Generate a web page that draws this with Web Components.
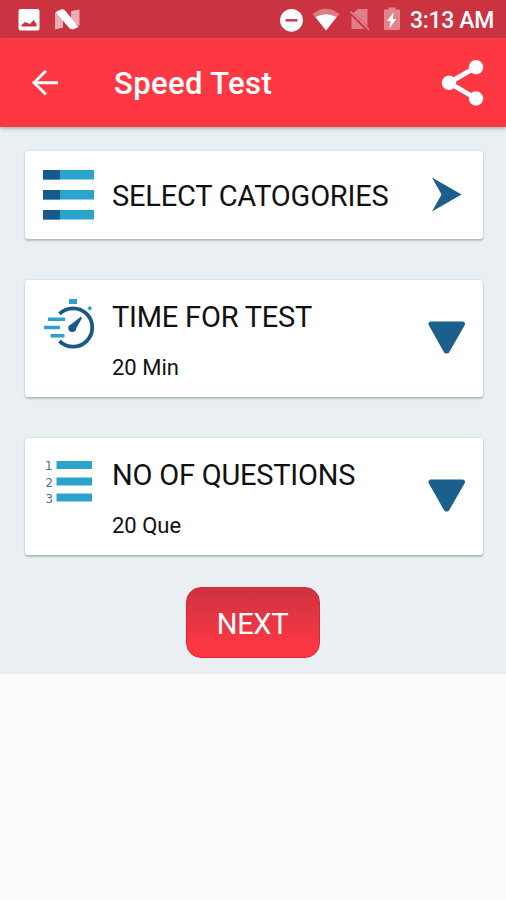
<!DOCTYPE html>
<html lang="en">
<head>
<meta charset="utf-8">
<title>Speed Test</title>
<style>
html, body { margin: 0; height: 100%; background: #fbfbfb; font-family: Roboto, "Liberation Sans", sans-serif; }
</style>
</head>
<body>
<speed-test-app></speed-test-app>
<script>
const define = (name, html) => customElements.define(name, class extends HTMLElement {
  constructor() {
    super();
    this.attachShadow({ mode: 'open' }).innerHTML = '<style>svg{display:block;flex:none}</style>' + html;
  }
});

define('status-bar', `
<style>
:host { display: flex; height: 38px; background: #cc3341; color: #fff; align-items: center; box-sizing: border-box; padding: 0 12px 0 18px; justify-content: space-between; }
.group { display: flex; align-items: center; }
.time { font-size: 23px; line-height: 36px; font-weight: 500; width: 84px; white-space: nowrap; padding-top: 3px; letter-spacing: -.35px; }
</style>
<div class="group">
<svg width="64" height="38" viewBox="18 0 64 38">
  <path fill="#fff" fill-rule="evenodd" d="M20.5 9h17a2 2 0 0 1 2 2v17.500a2 2 0 0 1-2 2h-17a2 2 0 0 1-2-2V11a2 2 0 0 1 2-2zM21.500 26.500h15v-2.500l-3-4-3.500 4-5-2-3.500 3z"/>
  <path fill="#fff" opacity=".6" d="M55 12.500L63 16v11.500L55 29.500zM71 11L79.500 9.500V26L71 21.500z"/>
  <path fill="#fff" d="M55.500 12l5.500-2.500q3-.7 4.500 1.500L78.500 27l-5 2.200q-2.500.5-4.500-1.500z"/>
</svg>
</div>
<div class="group">
<svg width="131" height="38" viewBox="279 0 131 38">
  <circle cx="291.500" cy="20.300" r="11.400" fill="#fff"/><path d="M285.500 20.300h12" stroke="#cc3341" stroke-width="2.400"/>
  <path d="M312.500 14q13.500-10.500 27 0L326 30.500z" fill="#fff" opacity=".35"/>
  <path d="M315.500 17q10.500-5.500 21 0L326 30.500z" fill="#fff"/>
  <path d="M358 9h9.500v17.500L353.500 13zM351.500 16l13 13h-13z" fill="#fff" opacity=".38"/>
  <path d="M350.500 11.500l18.500 18" stroke="#fff" stroke-width="1.700" opacity=".4"/>
  <path d="M388.500 7.500h7v2h3.500a1 1 0 0 1 1 1v18.500a1 1 0 0 1-1 1h-14a1 1 0 0 1-1-1V10.500a1 1 0 0 1 1-1h3.500z" fill="#fff" opacity=".4"/>
  <path d="M394 12l-7 9h3.700l-1.400 7.500 7-9.500h-3.600z" fill="#fff"/>
</svg>
<span class="time">3:13 AM</span>
</div>`);

define('app-bar', `
<style>
:host { display: flex; height: 89px; background: #fe3843; color: #fff; align-items: center; position: relative; box-shadow: 0 1px 4px rgba(70,90,100,.55); }
.title { flex: 1; font-size: 31px; line-height: 40px; font-weight: 500; letter-spacing: .4px; padding-top: 2px; }
</style>
<svg width="114" height="89" viewBox="0 38 114 89"><path d="M58 82.700H34M46 70.800L34 82.700 46 94.500" fill="none" stroke="#fff" stroke-width="2.900"/></svg>
<span class="title"><slot></slot></span>
<svg width="76" height="89" viewBox="430 38 76 89"><path d="M476 67.200L449 82.800 476 98.500" fill="none" stroke="#fff" stroke-width="4.800"/><g fill="#fff"><circle cx="476" cy="67.200" r="7.200"/><circle cx="449" cy="82.800" r="7.200"/><circle cx="476" cy="98.500" r="7.200"/></g></svg>`);

define('option-card', `
<style>
:host { display: grid; grid-template-columns: 87px 1fr 76px; height: var(--card-height, 117px); box-sizing: border-box; background: #fff; border-radius: 3px; box-shadow: 0 2px 2px rgba(80,95,95,.32), 0 0 2px rgba(80,95,95,.25); color: #111; }
.copy { display: flex; flex-direction: column; padding-top: var(--copy-top, 19px); white-space: nowrap; }
.label { font-size: 29px; line-height: 36px; letter-spacing: -.22px; }
.value { font-size: 22px; line-height: 28px; padding-top: 19px; }
</style>
<slot name="icon"></slot>
<div class="copy"><span class="label"><slot></slot></span><span class="value"><slot name="value"></slot></span></div>
<slot name="action"></slot>`);

define('category-icon', `<style>:host{display:block}</style>
<svg width="87" height="87" viewBox="25 151 87 87"><path fill="#2ba3cc" d="M43 170h51v9.500H43zM43 190h51v9.500H43zM43 210h51v9.500H43z"/><path fill="#165a8c" d="M43 170h17v9.500H43zM43 190h17v9.500H43zM43 210h17v9.500H43z"/></svg>`);

define('timer-icon', `<style>:host{display:block}</style>
<svg width="87" height="117" viewBox="25 280 87 117">
<path d="M59.500 313.900A19.200 19.200 0 1 1 59.500 341.100" fill="none" stroke="#185987" stroke-width="3.800"/>
<path d="M80.700 316.700L82 318 76.300 328.200A4 4 0 1 1 71.200 324.200z" fill="#185987"/>
<path d="M69 299h8v5h-8zM48 317.500h17v3.500H48zM44 325.800h16v3.500H44zM50.500 334h14v3.500h-14z" fill="#2ba3cc"/>
<path d="M89.800 306l2.500 2.300-2.500 2.400-2.400-2.400z" fill="#2ba3cc"/></svg>`);

define('question-icon', `<style>:host{display:block} text{font:13px "DejaVu Sans Condensed","DejaVu Sans",sans-serif;fill:#47718d}</style>
<svg width="87" height="117" viewBox="25 438 87 117"><path fill="#2ba3cc" d="M56.500 461H92v8H56.500zM56.500 477.500H92v8H56.500zM56.500 493.500H92v8H56.500z"/>
<text x="45" y="469.500">1</text><text x="45.500" y="486.500">2</text><text x="45.500" y="502.800">3</text></svg>`);

define('forward-icon', `<style>:host{display:block}</style>
<svg width="76" height="87" viewBox="407 151 76 87"><path d="M432 177.500L461.500 194.500 432 211.500 441.500 194.500z" fill="#1b5f8c"/></svg>`);

define('dropdown-icon', `<style>:host{display:block}</style>
<svg width="76" height="117" viewBox="407 280 76 117"><path d="M431 324H462.500L447 351h-.8z" fill="#1b5f8c" stroke="#1b5f8c" stroke-width="5" stroke-linejoin="round"/></svg>`);

define('next-button', `
<style>
:host { display: flex; width: 134px; height: 71px; box-sizing: border-box; border-radius: 15px; background: linear-gradient(#cd3340, #fc3744 85%); border: 1px solid #e32335; color: #fff; align-items: center; justify-content: center; font-size: 29px; line-height: 36px; letter-spacing: -.3px; padding-top: 3px; }
</style><slot></slot>`);

define('speed-test-app', `
<style>
:host { display: block; }
main { display: flex; flex-direction: column; box-sizing: border-box; height: 547px; padding: 24px 23px 0 25px; background: #e9eff2; gap: 41px; }
.categories { --card-height: 88px; --copy-top: 27px; }
next-button { align-self: center; margin: -9px 0 0 -3px; }
</style>
<status-bar></status-bar>
<app-bar>Speed Test</app-bar>
<main>
<option-card class="categories"><category-icon slot="icon"></category-icon>SELECT CATOGORIES<forward-icon slot="action"></forward-icon></option-card>
<option-card><timer-icon slot="icon"></timer-icon>TIME FOR TEST<span slot="value">20 Min</span><dropdown-icon slot="action"></dropdown-icon></option-card>
<option-card><question-icon slot="icon"></question-icon>NO OF QUESTIONS<span slot="value">20 Que</span><dropdown-icon slot="action"></dropdown-icon></option-card>
<next-button>NEXT</next-button>
</main>`);
</script>
</body>
</html>
